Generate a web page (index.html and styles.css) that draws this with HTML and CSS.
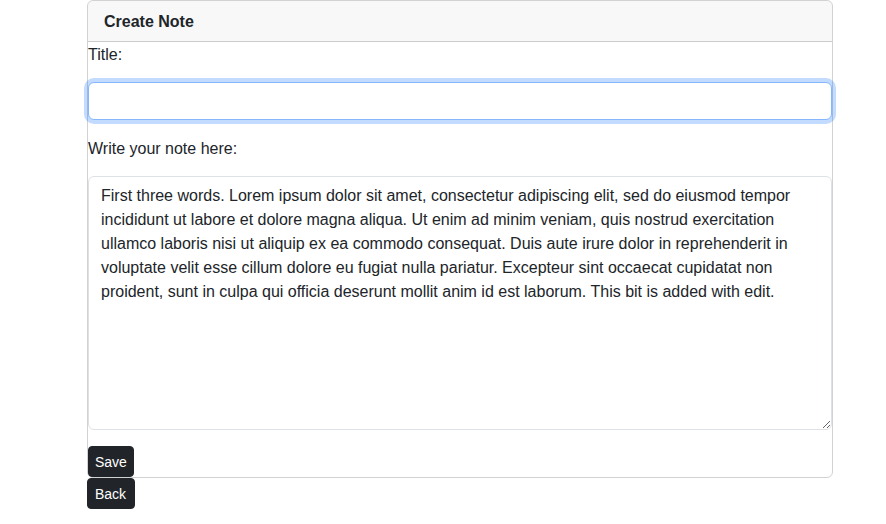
FILE: index.html
```html
<!DOCTYPE html>
<html lang="en">
<head>
<meta charset="utf-8">
<title>Create Note</title>
<link rel="stylesheet" href="styles.css">
</head>
<body>
<div class="page">
  <div class="card">
    <div class="card-header">Create Note</div>
    <form class="card-body">
      <label class="field-label" for="title">Title:</label>
      <input class="form-control title-input" id="title" type="text">
      <label class="field-label" for="note">Write your note here:</label>
      <textarea class="form-control note-area" id="note" rows="10">First three words. Lorem ipsum dolor sit amet, consectetur adipiscing elit, sed do eiusmod tempor incididunt ut labore et dolore magna aliqua. Ut enim ad minim veniam, quis nostrud exercitation ullamco laboris nisi ut aliquip ex ea commodo consequat. Duis aute irure dolor in reprehenderit in voluptate velit esse cillum dolore eu fugiat nulla pariatur. Excepteur sint occaecat cupidatat non proident, sunt in culpa qui officia deserunt mollit anim id est laborum. This bit is added with edit.</textarea>
      <button class="btn btn-dark" type="button">Save</button>
    </form>
  </div>
  <button class="btn btn-dark btn-back" type="button">Back</button>
</div>
</body>
</html>
```
FILE: styles.css
```css
* { box-sizing: border-box; }
html, body { margin: 0; padding: 0; background: #fff; }
body {
  font-family: "Liberation Sans", Arial, sans-serif;
  font-size: 16px;
  line-height: 1.5;
  color: #212529;
}
.page {
  margin-left: 87px;
  width: 746px;
  display: flex;
  flex-direction: column;
  align-items: flex-start;
}
.card {
  width: 100%;
  border: 1px solid rgba(0, 0, 0, 0.175);
  border-radius: 6px;
}
.card-header {
  padding: 9px 16px 7px;
  background: rgba(33, 37, 41, 0.03);
  border-bottom: 1px solid rgba(0, 0, 0, 0.175);
  border-radius: 5px 5px 0 0;
  font-weight: bold;
}
.card-body {
  margin: 0;
  display: flex;
  flex-direction: column;
  align-items: flex-start;
  gap: 16px;
}
.field-label {
  display: block;
  padding-top: 2px;
  line-height: 22px;
}
.form-control {
  display: block;
  width: 100%;
  padding: 6px 12px;
  font: inherit;
  line-height: 1.5;
  color: #212529;
  background: #fff;
  border: 1px solid #dee2e6;
  border-radius: 6px;
  margin: 0;
}
.title-input {
  height: 38px;
  border-color: #86b7fe;
  outline: none;
  box-shadow: 0 0 0 4px rgba(13, 110, 253, 0.25);
}
.note-area {
  height: 254px;
  padding-top: 7px;
  padding-bottom: 5px;
  resize: vertical;
}
.btn {
  display: inline-block;
  font-family: inherit;
  font-size: 14px;
  line-height: 1.5;
  padding: 5px 6px 3px;
  border: 1px solid #212529;
  border-radius: 4px;
  margin: 0;
  cursor: pointer;
}
.btn-back {
  padding-left: 7px;
  padding-right: 8px;
}
.btn-dark {
  background: #212529;
  color: #fff;
}
```
